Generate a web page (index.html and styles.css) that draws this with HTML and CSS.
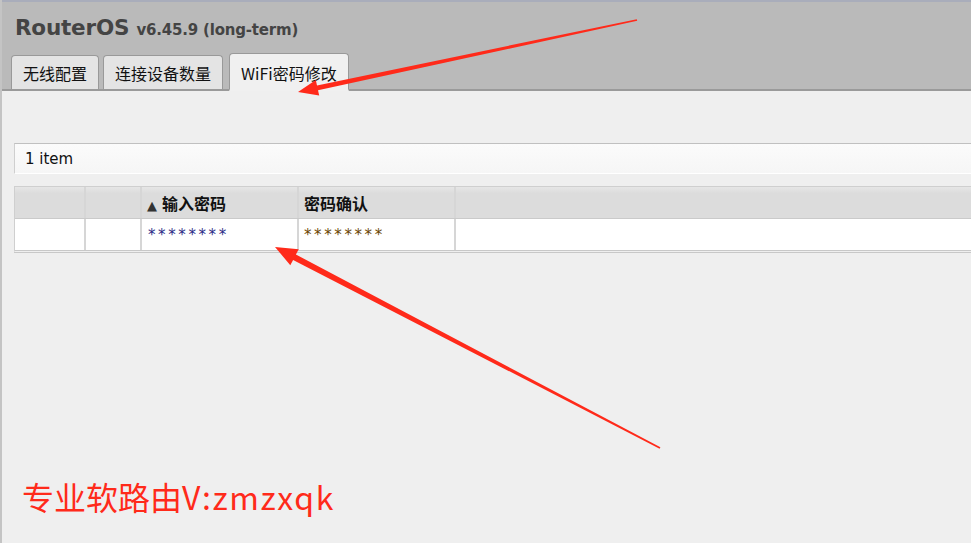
FILE: index.html
```html
<!DOCTYPE html>
<html lang="zh">
<head>
<meta charset="utf-8">
<title>RouterOS</title>
<link rel="stylesheet" href="styles.css">
</head>
<body>
<div class="page">
  <header class="header">
    <h1 class="title">RouterOS <span class="ver">v6.45.9 (long-term)</span></h1>
    <nav class="tabs">
      <div class="tab">无线配置</div>
      <div class="tab">连接设备数量</div>
      <div class="tab active">WiFi密码修改</div>
    </nav>
  </header>
  <main class="content">
    <div class="count">1 item</div>
    <div class="grid">
      <div class="row head">
        <div class="cell c1"></div>
        <div class="cell c2"></div>
        <div class="cell c3"><span class="sort">▲</span>输入密码</div>
        <div class="cell c4">密码确认</div>
        <div class="cell c5"></div>
      </div>
      <div class="row data">
        <div class="cell c1"></div>
        <div class="cell c2"></div>
        <div class="cell c3 pw1">********</div>
        <div class="cell c4 pw2">********</div>
        <div class="cell c5"></div>
      </div>
    </div>
    <p class="promo">专业软路由<span class="latin">V:zmzxqk</span></p>
  </main>
  <svg class="arrows" width="971" height="543" viewBox="0 0 971 543">
    <polygon fill="#ff2a1a" points="298,92 319.2,95.6 318,90.2 637.2,20.8 636.8,19.2 317,85.4 315.8,80"/>
    <polygon fill="#ff2a1a" points="275,247 290.3,265.2 293.1,259.9 659.6,448.7 660.4,447.3 295.9,254.5 298.7,249.2"/>
  </svg>
</div>
</body>
</html>
```
FILE: styles.css
```css
* { box-sizing: border-box; }
html, body { margin: 0; padding: 0; }
body {
  background: #efefef;
  font-family: "DejaVu Sans", Verdana, "Noto Sans CJK SC", sans-serif;
  color: #111;
  width: 971px;
  height: 543px;
  overflow: hidden;
}
.page { position: relative; width: 971px; height: 543px; border-left: 2px solid #c4c4c4; }
.header {
  height: 91px;
  background: #bababa;
  border-top: 2px solid #a9adbb;
  border-bottom: 2px solid #9a9a9a;
  display: flex;
  flex-direction: column;
  justify-content: space-between;
}
.title {
  margin: 0;
  padding: 13px 0 0 13px;
  font-size: 21.5px;
  font-weight: bold;
  color: #444;
  line-height: 26px;
  letter-spacing: -0.2px;
}
.ver { font-size: 15px; }
.tabs {
  display: flex;
  align-items: flex-end;
  gap: 4px;
  padding-left: 9px;
  margin-bottom: -2px;
}
.tab {
  height: 36px;
  padding: 0 11px;
  background: #e4e4e4;
  border: 1px solid #999;
  border-bottom: 2px solid #9a9a9a;
  border-radius: 4px 4px 0 0;
  font-family: "Noto Sans CJK SC", "DejaVu Sans", sans-serif;
  font-size: 16px;
  line-height: 35px;
  color: #111;
}
.tab.active {
  height: 38px;
  margin-left: 2px;
  padding: 0 11px;
  background: #f0f0f0;
  border-bottom: 2px solid #f0f0f0;
  line-height: 38px;
}
.content { padding: 52px 0 0 12px; }
.count {
  height: 31px;
  background: linear-gradient(#fbfbfb, #f6f6f6);
  border-top: 1px solid #c0c0c0;
  border-left: 1px solid #cfcfcf;
  border-bottom: 1px solid #fff;
  font-size: 15px;
  line-height: 30px;
  padding-left: 10px;
  color: #111;
}
.grid {
  margin-top: 12px;
  border-top: 1px solid #cfcfcf;
  border-left: 1px solid #cfcfcf;
  border-bottom: 3px double #c8c8c8;
}
.row { display: flex; }
.row.head { height: 32px; background: linear-gradient(#e6e6e6, #dcdcdc 20%, #dcdcdc); border-bottom: 1px solid #cacaca; }
.row.data { height: 31px; background: #fff; }
.cell {
  border-right: 2px solid #d6d6d6;
  padding-left: 5px;
  font-size: 15px;
  font-family: "DejaVu Sans", "Noto Sans CJK SC", sans-serif;
  white-space: nowrap;
}
.head .cell { line-height: 32px; font-weight: bold; color: #111; font-family: "Noto Sans CJK SC", sans-serif; font-size: 16px; }
.data .cell { line-height: 32px; }
.c1 { width: 71px; }
.c2 { width: 56px; }
.c3 { width: 157px; }
.c4 { width: 157px; }
.c5 { flex: 1; border-right: none; }
.sort { font-size: 13px; color: #333; font-family: "DejaVu Sans", sans-serif; margin-right: 5px; }
.pw1 { color: #2c2c86; padding-left: 6px; letter-spacing: 2.6px; }
.pw2 { color: #6a4400; padding-left: 5px; letter-spacing: 2.6px; }
.promo {
  margin: 223px 0 0 8px;
  font-family: "Noto Sans CJK SC", sans-serif;
  font-size: 32px;
  line-height: 40px;
  color: #ff2a1a;
}
.latin { letter-spacing: 1.6px; }
.arrows { position: absolute; left: -2px; top: 0; pointer-events: none; }
```
